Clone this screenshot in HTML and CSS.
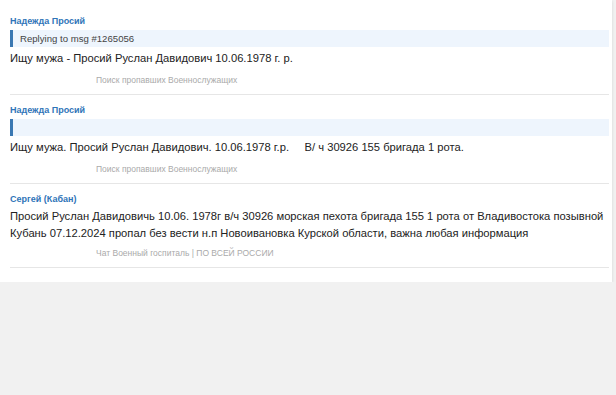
FILE: index.html
```html
<!DOCTYPE html>
<html lang="ru">
<head>
    <meta charset="UTF-8">
    <meta name="viewport" content="width=device-width, initial-scale=1.0">
    <title>Сообщения</title>
    <link rel="stylesheet" href="styles.css">
</head>
<body>
    <div class="feed">
        <div class="message">
            <div class="author">Надежда Просий</div>
            <div class="reply">Replying to msg #1265056</div>
            <p class="text">Ищу мужа - Просий Руслан Давидович 10.06.1978 г. р.</p>
            <div class="source">Поиск пропавших Военнослужащих</div>
        </div>

        <div class="message">
            <div class="author">Надежда Просий</div>
            <div class="reply"></div>
            <p class="text">Ищу мужа. Просий Руслан Давидович. 10.06.1978 г.р. &nbsp;&nbsp;&nbsp;&nbsp;В/ ч 30926 155 бригада 1 рота.</p>
            <div class="source">Поиск пропавших Военнослужащих</div>
        </div>

        <div class="message">
            <div class="author">Сергей (Кабан)</div>
            <p class="text">Просий Руслан Давидовичь 10.06. 1978г в/ч 30926 морская пехота бригада 155 1 рота от Владивостока позывной Кубань 07.12.2024 пропал без вести н.п Новоивановка Курской области, важна любая информация</p>
            <div class="source source-tight">Чат Военный госпиталь | ПО ВСЕЙ РОССИИ</div>
        </div>
    </div>
</body>
</html>
```

FILE: styles.css
```css
* {
    margin: 0;
    padding: 0;
    box-sizing: border-box;
}

body {
    font-family: "Liberation Sans", Arial, sans-serif;
    color: #222;
    background-color: #f1f1f1;
}

.feed {
    width: 612px;
    background: #fff;
    padding: 6px 3px 14px 10px;
    box-shadow: 0 1px 3px rgba(0, 0, 0, 0.12);
}

.message {
    padding: 9px 0 8px;
    border-bottom: 1px solid #e6e6e6;
}

.author {
    font-size: 9px;
    line-height: 12px;
    font-weight: bold;
    color: #2f74b8;
    margin-bottom: 3px;
}

.reply {
    height: 17px;
    margin-bottom: 3px;
    padding-left: 7px;
    border-left: 3px solid #3a78b2;
    background: #eef5fd;
    font-size: 9.6px;
    line-height: 17px;
    color: #444;
}

.text {
    font-size: 11.2px;
    line-height: 17px;
}

.source {
    margin-top: 7px;
    padding-left: 86px;
    font-size: 8.5px;
    line-height: 12px;
    color: #aaa;
}

.source-tight {
    margin-top: 5px;
}
```
